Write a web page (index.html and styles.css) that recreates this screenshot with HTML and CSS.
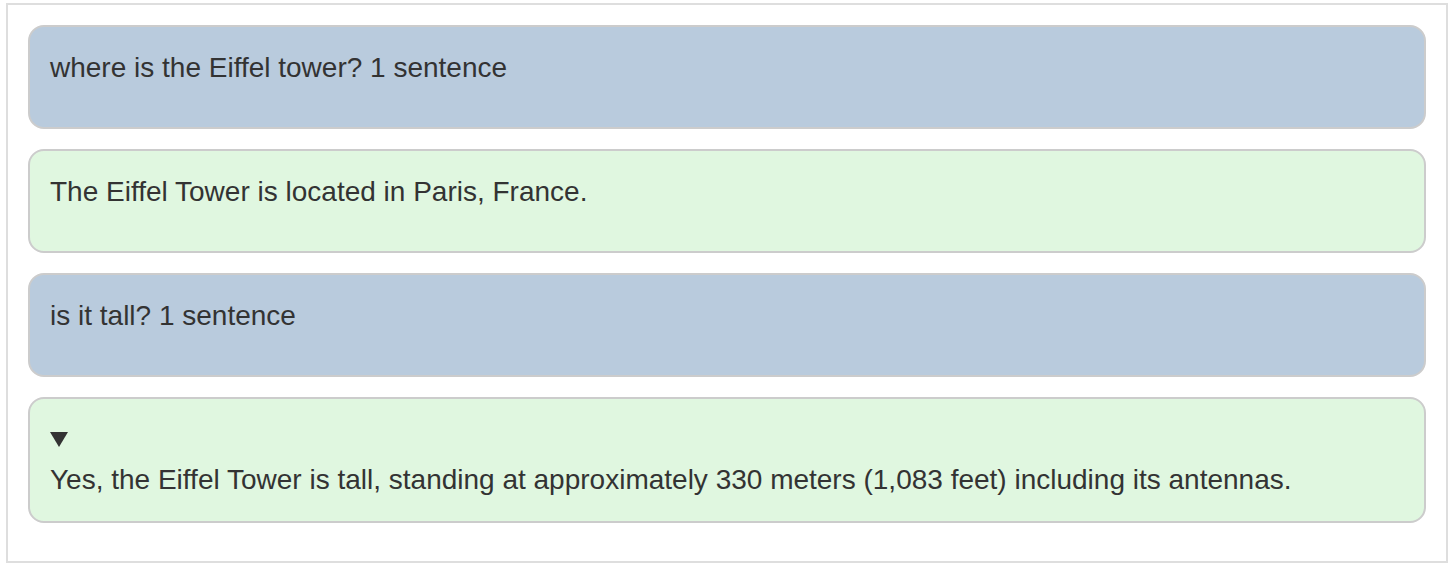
FILE: index.html
```html
<!DOCTYPE html>
<html lang="en">
<head>
<meta charset="utf-8">
<title>Chat</title>
<link rel="stylesheet" href="styles.css">
</head>
<body>
<div class="chat">
  <div class="msg user"><p>where is the Eiffel tower? 1 sentence</p></div>
  <div class="msg bot"><p>The Eiffel Tower is located in Paris, France.</p></div>
  <div class="msg user"><p>is it tall? 1 sentence</p></div>
  <div class="msg bot">
    <div class="summary"><svg class="tri" width="18" height="15" viewBox="0 0 18 15"><path d="M0 0 H18 L9 15 Z" fill="#333"/></svg></div>
    <p>Yes, the Eiffel Tower is tall, standing at approximately 330 meters (1,083 feet) including its antennas.</p>
  </div>
</div>
</body>
</html>
```
FILE: styles.css
```css
html, body {
  margin: 0;
  padding: 0;
  background: #ffffff;
}
body {
  font-family: "Liberation Sans", Arial, Helvetica, sans-serif;
  color: #333333;
}
.chat {
  margin: 3px 2px 0 6px;
  border: 2px solid #dedede;
  padding: 20px 20px 38px 20px;
  display: flex;
  flex-direction: column;
  gap: 20px;
}
.msg {
  box-sizing: border-box;
  min-height: 104px;
  border: 2px solid #cccccc;
  border-radius: 16px;
  padding: 25px 20px;
  font-size: 28px;
  line-height: 32px;
}
.msg p {
  margin: 0;
}
.user {
  background: #b9cbdd;
}
.bot {
  background: #e0f7e0;
}
.summary {
  height: 32px;
}
.tri {
  display: block;
  margin-top: 8px;
}
```
